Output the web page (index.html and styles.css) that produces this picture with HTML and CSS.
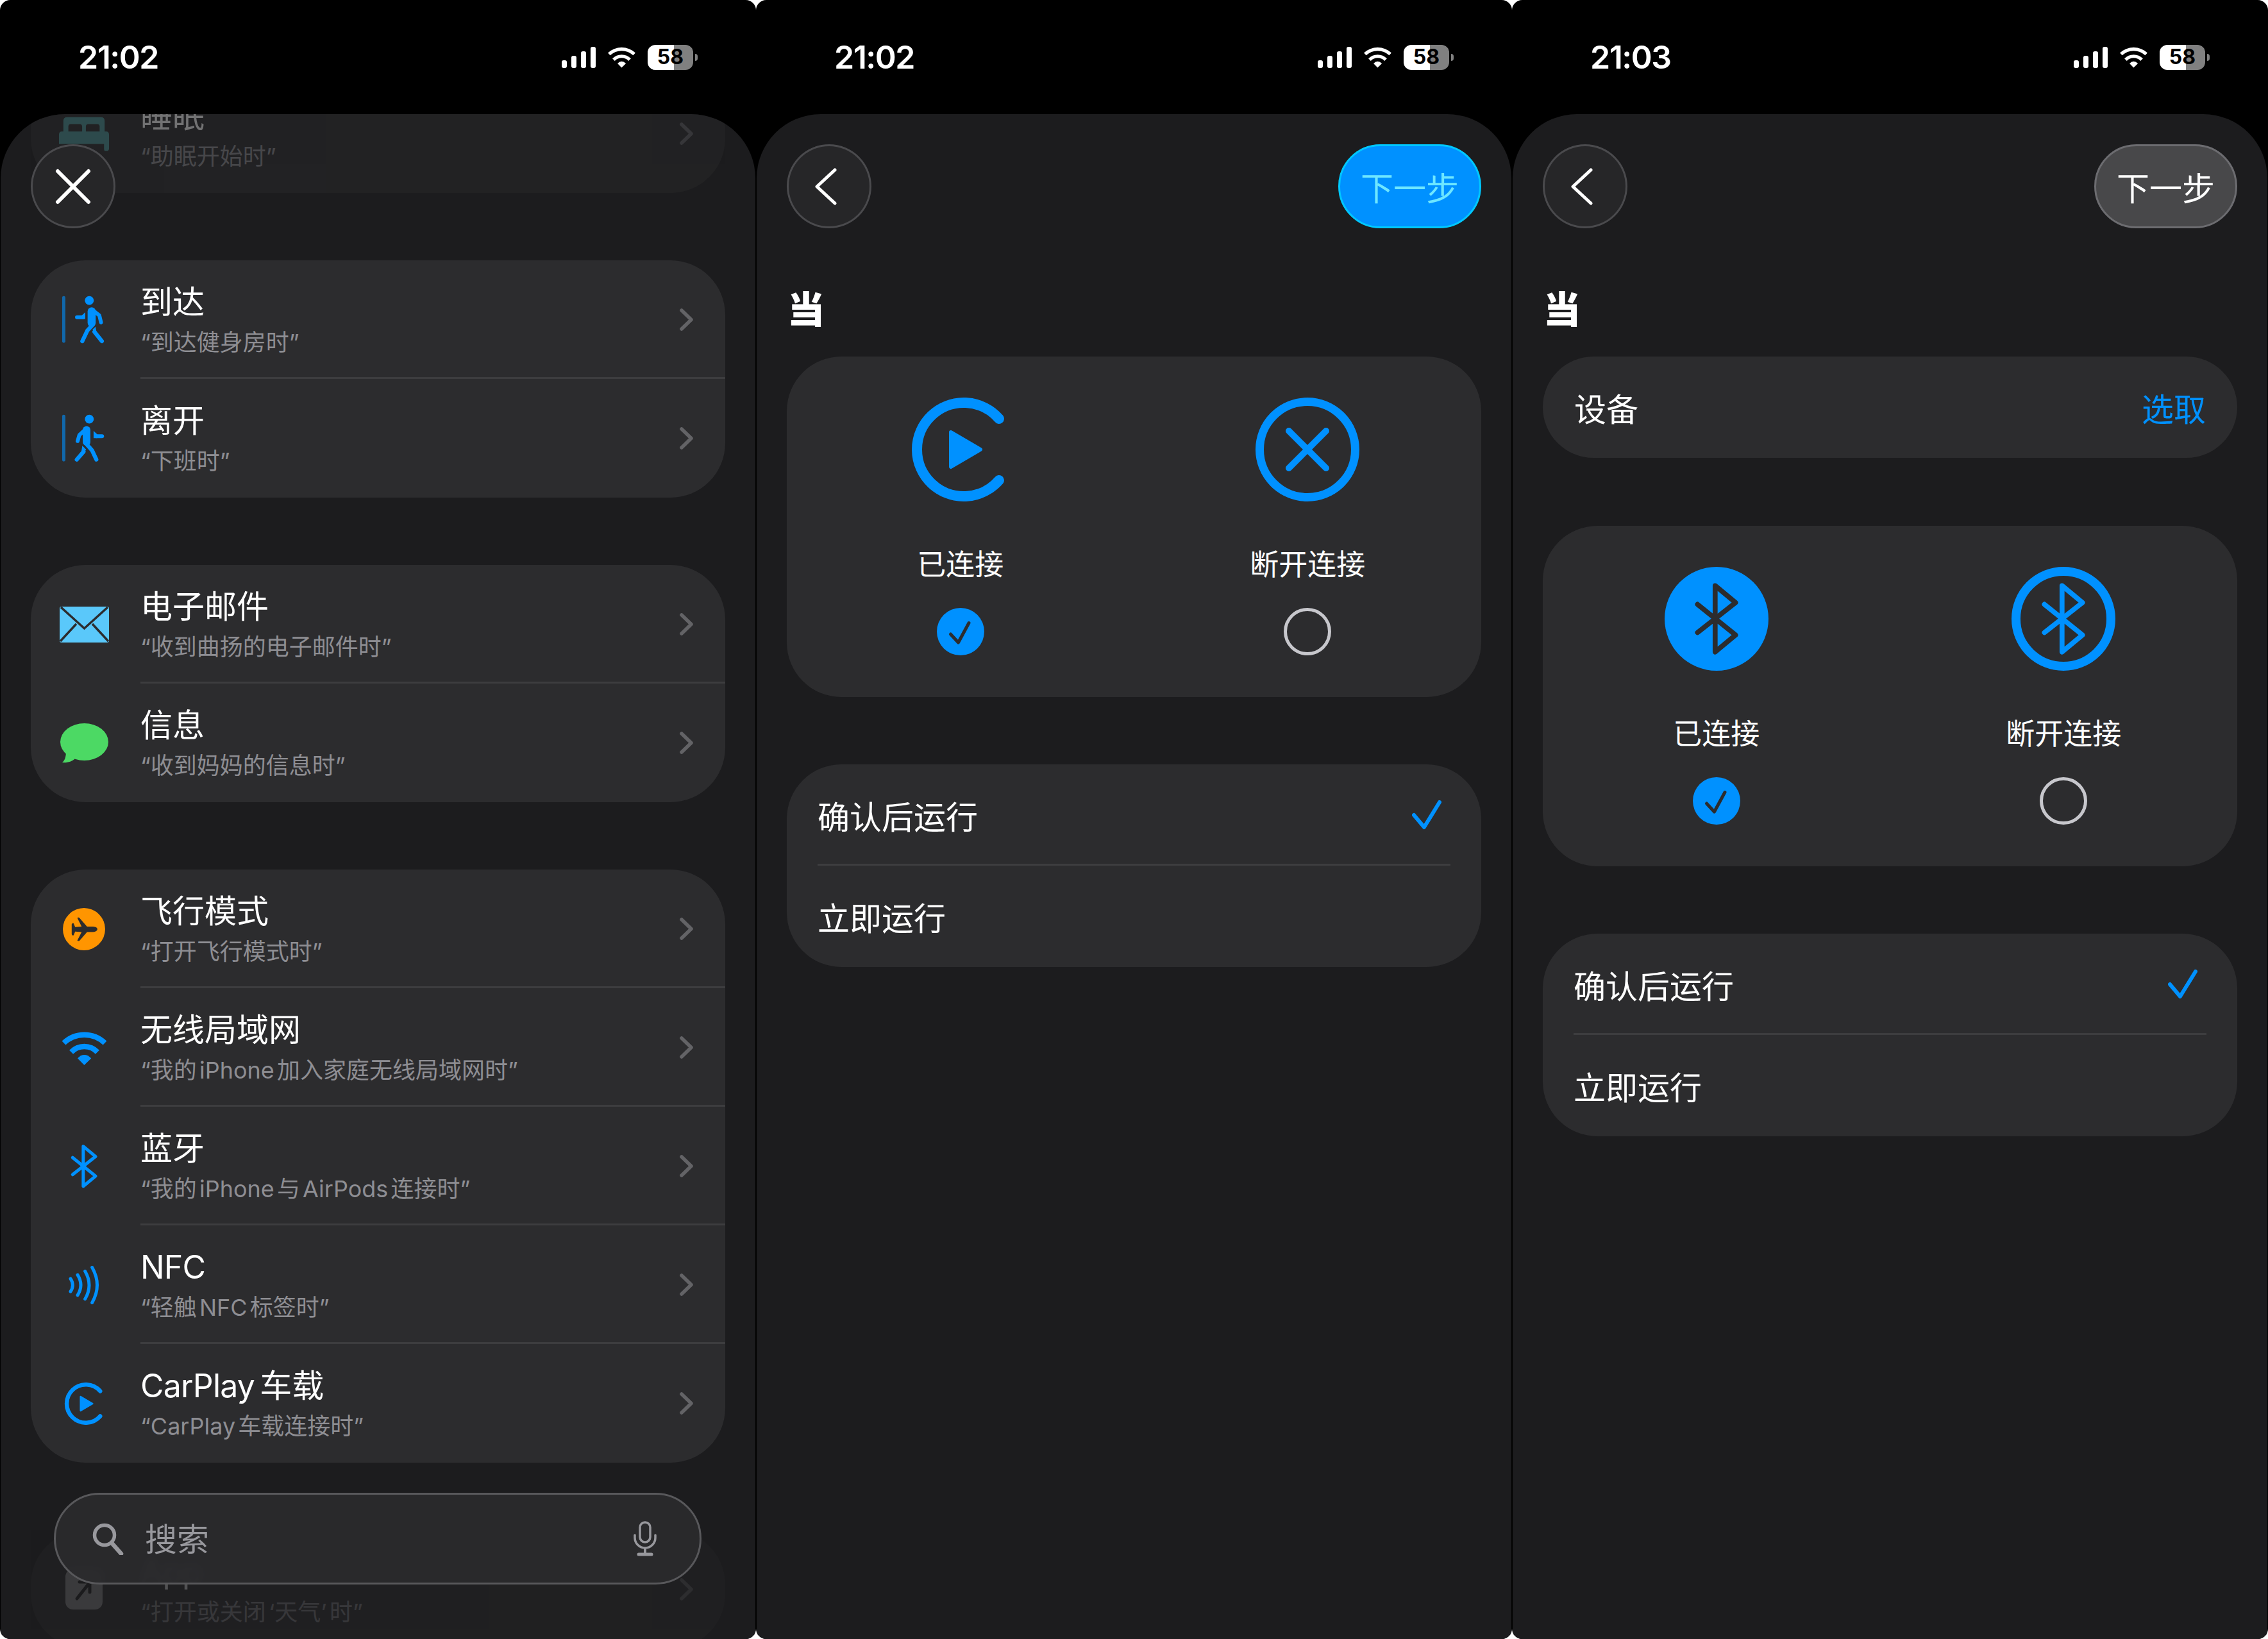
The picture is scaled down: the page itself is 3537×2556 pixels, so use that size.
FILE: index.html
```html
<!DOCTYPE html>
<html lang="zh-CN">
<head>
    <meta charset="UTF-8">
    <meta name="viewport" content="width=device-width, initial-scale=1.0">
    <title>快捷指令自动化</title>
    <link rel="stylesheet" href="styles.css">
</head>
<body>
    <!-- shared icons -->
    <svg class="sprite" aria-hidden="true">
        <symbol id="i-wifi" viewBox="40 615 233 172">
            <path d="M57 678A144 144 0 0 1 256 678M93 722A88 88 0 0 1 220 722" fill="none" stroke="currentColor" stroke-width="26"/>
            <path d="M124 752Q156 718 190 752L156 785Z" fill="currentColor"/>
        </symbol>
        <symbol id="i-chev" viewBox="0 0 21 35">
            <path d="M3 3L18 17.5L3 32" fill="none" stroke="currentColor" stroke-width="5.5" stroke-linecap="round" stroke-linejoin="round"/>
        </symbol>
        <symbol id="i-play" viewBox="0 0 162 162">
            <path d="M138 33A73 73 0 1 0 138 129" fill="none" stroke="currentColor" stroke-width="16" stroke-linecap="round"/>
            <path d="M63 54L109 81L63 108Z" fill="currentColor" stroke="currentColor" stroke-width="6" stroke-linejoin="round"/>
        </symbol>
        <symbol id="i-bt" viewBox="85 68 137 217">
            <path d="M100 135L208 222L150 270V82L208 130L100 215" fill="none" stroke="currentColor" stroke-width="15" stroke-linecap="round" stroke-linejoin="round"/>
        </symbol>
        <symbol id="i-walk-in" viewBox="40 50 240 250">
            <path d="M65 72V277" stroke="currentColor" stroke-width="15" stroke-linecap="round" opacity="0.6"/>
            <circle cx="185" cy="85" r="21" fill="currentColor"/>
            <g fill="none" stroke="currentColor" stroke-linecap="round" stroke-linejoin="round">
                <path d="M203 132L232 155L240 188" stroke-width="18"/>
                <path d="M196 136V190" stroke-width="38"/>
                <path d="M200 200L176 226L152 276" stroke-width="19"/>
                <path d="M209 232L244 276" stroke-width="19"/>
                <path d="M127 164H155" stroke-width="18"/>
            </g>
            <path d="M150 155L166 140V172H150Z M200 222L214 208L220 238L208 240Z" fill="currentColor"/>
        </symbol>
        <symbol id="i-walk-out" viewBox="40 50 240 250">
            <path d="M65 72V277" stroke="currentColor" stroke-width="15" stroke-linecap="round" opacity="0.6"/>
            <circle cx="185" cy="85" r="21" fill="currentColor"/>
            <g fill="none" stroke="currentColor" stroke-linecap="round" stroke-linejoin="round">
                <path d="M165 135L138 160L130 188" stroke-width="18"/>
                <path d="M172 136V192" stroke-width="36"/>
                <path d="M170 200L198 232L218 275" stroke-width="19"/>
                <path d="M158 238L126 275" stroke-width="19"/>
                <path d="M245 165H218" stroke-width="18"/>
            </g>
            <path d="M205 140L222 156V174H205Z M152 210L170 228L158 246L148 236Z" fill="currentColor"/>
        </symbol>
    </svg>

    <div class="phones">
        <!-- trigger list -->
        <section class="phone">
            <div class="statusbar">
                <span class="time">21:02</span>
                <div class="status-icons">
                    <div class="signal"><i></i><i></i><i></i><i></i></div>
                    <svg class="status-wifi"><use href="#i-wifi"/></svg>
                    <div class="battery"><b>58</b></div>
                    <span class="battery-cap"></span>
                </div>
            </div>
            <div class="sheet">
                <div class="list">
                    <div class="card ghost ghost-top">
                        <div class="row">
                            <div class="row-icon">
                                <svg class="bed" viewBox="0 0 82 54"><path d="M8 27V6Q8 0 14 0H68Q74 0 74 6V23H66V15Q66 11 62 11H48Q44 11 44 15V23H38V15Q38 11 34 11H20Q16 11 16 15V23H8Z M6 23H76Q81 23 81 28V50Q81 54 77 54H75Q73 54 73 50V43H1V28Q1 23 6 23Z" fill="currentColor"/></svg>
                            </div>
                            <div class="row-body">
                                <div class="row-text"><div class="row-title">睡眠</div><div class="row-sub">“助眠开始时”</div></div>
                                <svg class="chev"><use href="#i-chev"/></svg>
                            </div>
                        </div>
                    </div>

                    <div class="card">
                        <div class="row">
                            <div class="row-icon"><svg class="walk"><use href="#i-walk-in"/></svg></div>
                            <div class="row-body">
                                <div class="row-text"><div class="row-title">到达</div><div class="row-sub">“到达健身房时”</div></div>
                                <svg class="chev"><use href="#i-chev"/></svg>
                            </div>
                        </div>
                        <div class="row">
                            <div class="row-icon"><svg class="walk"><use href="#i-walk-out"/></svg></div>
                            <div class="row-body">
                                <div class="row-text"><div class="row-title">离开</div><div class="row-sub">“下班时”</div></div>
                                <svg class="chev"><use href="#i-chev"/></svg>
                            </div>
                        </div>
                    </div>

                    <div class="card">
                        <div class="row">
                            <div class="row-icon">
                                <svg class="mail" viewBox="0 0 77 56">
                                    <rect width="77" height="56" rx="3" fill="#5ac8fa"/>
                                    <path d="M2 1L38.5 34L75 1M1 54L26 27M76 54L51 27" fill="none" stroke="#2c2c2e" stroke-width="3.5"/>
                                </svg>
                            </div>
                            <div class="row-body">
                                <div class="row-text"><div class="row-title">电子邮件</div><div class="row-sub">“收到曲扬的电子邮件时”</div></div>
                                <svg class="chev"><use href="#i-chev"/></svg>
                            </div>
                        </div>
                        <div class="row">
                            <div class="row-icon">
                                <svg class="bubble" viewBox="0 0 75 62">
                                    <ellipse cx="37.5" cy="29" rx="37.5" ry="29" fill="#4cd964"/>
                                    <path d="M9 44C9 52 7 58 3 61C10 62 18 60 23 55Z" fill="#4cd964"/>
                                </svg>
                            </div>
                            <div class="row-body">
                                <div class="row-text"><div class="row-title">信息</div><div class="row-sub">“收到妈妈的信息时”</div></div>
                                <svg class="chev"><use href="#i-chev"/></svg>
                            </div>
                        </div>
                    </div>

                    <div class="card">
                        <div class="row">
                            <div class="row-icon">
                                <svg class="plane" viewBox="58 49 196 196">
                                    <circle cx="156" cy="147" r="98" fill="#ff9500"/>
                                    <path d="M218 147C218 140 210 136 198 135L170 135L135 95Q130 91 125 95L145 135L115 137L108 120Q100 118 99 125L99 170Q100 178 108 175L115 158L145 160L125 200Q130 204 136 200L170 160L198 160C210 159 218 154 218 147Z" fill="#2c2c2e"/>
                                </svg>
                            </div>
                            <div class="row-body">
                                <div class="row-text"><div class="row-title">飞行模式</div><div class="row-sub">“打开飞行模式时”</div></div>
                                <svg class="chev"><use href="#i-chev"/></svg>
                            </div>
                        </div>
                        <div class="row">
                            <div class="row-icon"><svg class="wifi"><use href="#i-wifi"/></svg></div>
                            <div class="row-body">
                                <div class="row-text"><div class="row-title">无线局域网</div><div class="row-sub">“我的 iPhone 加入家庭无线局域网时”</div></div>
                                <svg class="chev"><use href="#i-chev"/></svg>
                            </div>
                        </div>
                        <div class="row">
                            <div class="row-icon"><svg class="bt"><use href="#i-bt"/></svg></div>
                            <div class="row-body">
                                <div class="row-text"><div class="row-title">蓝牙</div><div class="row-sub">“我的 iPhone 与 AirPods 连接时”</div></div>
                                <svg class="chev"><use href="#i-chev"/></svg>
                            </div>
                        </div>
                        <div class="row">
                            <div class="row-icon">
                                <svg class="nfc" viewBox="80 640 150 185">
                                    <path d="M92 703Q112 733 92 763M125 685Q155 733 125 780M160 668Q198 733 160 798M193 650Q240 733 193 815" fill="none" stroke="currentColor" stroke-width="15" stroke-linecap="round"/>
                                </svg>
                            </div>
                            <div class="row-body">
                                <div class="row-text"><div class="row-title latin">NFC</div><div class="row-sub">“轻触 NFC 标签时”</div></div>
                                <svg class="chev"><use href="#i-chev"/></svg>
                            </div>
                        </div>
                        <div class="row">
                            <div class="row-icon"><svg class="carplay"><use href="#i-play"/></svg></div>
                            <div class="row-body">
                                <div class="row-text"><div class="row-title"><span class="latin">CarPlay</span> 车载</div><div class="row-sub">“CarPlay 车载连接时”</div></div>
                                <svg class="chev"><use href="#i-chev"/></svg>
                            </div>
                        </div>
                    </div>

                    <div class="card ghost ghost-bottom">
                        <div class="row">
                            <div class="row-icon">
                                <svg class="shortcut" viewBox="0 0 58 63">
                                    <rect width="58" height="63" rx="12" fill="currentColor"/>
                                    <path d="M18 46L37 22M22 20H38V36" fill="none" stroke="#1c1c1e" stroke-width="5" stroke-linecap="round"/>
                                </svg>
                            </div>
                            <div class="row-body">
                                <div class="row-text"><div class="row-title">App</div><div class="row-sub">“打开或关闭 ‘天气’ 时”</div></div>
                                <svg class="chev"><use href="#i-chev"/></svg>
                            </div>
                        </div>
                    </div>
                </div>

                <button class="round-btn close-btn">
                    <svg class="close-x" viewBox="0 0 56 56"><path d="M4 4L52 52M52 4L4 52" stroke="currentColor" stroke-width="6" stroke-linecap="round"/></svg>
                </button>

                <div class="searchbar">
                    <svg class="search-icon" viewBox="0 0 50 50"><circle cx="19" cy="19" r="15.5" fill="none" stroke="currentColor" stroke-width="5.5"/><path d="M30 31L45 48" stroke="currentColor" stroke-width="6.5" stroke-linecap="round"/></svg>
                    <span class="search-label">搜索</span>
                    <svg class="mic" viewBox="0 0 38 55">
                        <rect x="11" y="2" width="16" height="31" rx="8" fill="none" stroke="currentColor" stroke-width="3.5"/>
                        <path d="M3 22V26A16 16 0 0 0 35 26V22" fill="none" stroke="currentColor" stroke-width="3.5" stroke-linecap="round"/>
                        <path d="M19 42V50" stroke="currentColor" stroke-width="4"/>
                        <path d="M9 52H29" stroke="currentColor" stroke-width="5" stroke-linecap="round"/>
                    </svg>
                </div>
            </div>
        </section>

        <!-- carplay trigger -->
        <section class="phone">
            <div class="statusbar">
                <span class="time">21:02</span>
                <div class="status-icons">
                    <div class="signal"><i></i><i></i><i></i><i></i></div>
                    <svg class="status-wifi"><use href="#i-wifi"/></svg>
                    <div class="battery"><b>58</b></div>
                    <span class="battery-cap"></span>
                </div>
            </div>
            <div class="sheet sheet-form">
                <div class="topbar">
                    <button class="round-btn">
                        <svg class="back-chev" viewBox="0 0 34 58"><path d="M31 3L3 29L31 55" fill="none" stroke="currentColor" stroke-width="5" stroke-linecap="round" stroke-linejoin="round"/></svg>
                    </button>
                    <button class="next-btn next-on">下一步</button>
                </div>
                <h2 class="form-title">当</h2>
                <div class="card choice-card">
                    <div class="choice">
                        <svg class="choice-icon play-shift"><use href="#i-play"/></svg>
                        <span class="choice-label">已连接</span>
                        <span class="radio radio-on">
                            <svg viewBox="0 0 74 74"><path d="M21.5 41L33.5 54L50 23.5" fill="none" stroke="#2c2c2e" stroke-width="5" stroke-linecap="round" stroke-linejoin="round"/></svg>
                        </span>
                    </div>
                    <div class="choice">
                        <svg class="choice-icon" viewBox="0 0 162 162">
                            <circle cx="81" cy="81" r="74.5" fill="none" stroke="currentColor" stroke-width="13"/>
                            <path d="M52 52L110 110M110 52L52 110" stroke="currentColor" stroke-width="10" stroke-linecap="round"/>
                        </svg>
                        <span class="choice-label">断开连接</span>
                        <span class="radio"></span>
                    </div>
                </div>
                <div class="card run-card">
                    <div class="run-row"><div class="run-body"><span>确认后运行</span>
                        <svg class="tick" viewBox="0 0 46 46"><path d="M3 23L19 42L43 3" fill="none" stroke="currentColor" stroke-width="6" stroke-linecap="round" stroke-linejoin="round"/></svg>
                    </div></div>
                    <div class="run-row"><div class="run-body"><span>立即运行</span></div></div>
                </div>
            </div>
        </section>

        <!-- bluetooth trigger -->
        <section class="phone">
            <div class="statusbar">
                <span class="time">21:03</span>
                <div class="status-icons">
                    <div class="signal"><i></i><i></i><i></i><i></i></div>
                    <svg class="status-wifi"><use href="#i-wifi"/></svg>
                    <div class="battery"><b>58</b></div>
                    <span class="battery-cap"></span>
                </div>
            </div>
            <div class="sheet sheet-form">
                <div class="topbar">
                    <button class="round-btn">
                        <svg class="back-chev" viewBox="0 0 34 58"><path d="M31 3L3 29L31 55" fill="none" stroke="currentColor" stroke-width="5" stroke-linecap="round" stroke-linejoin="round"/></svg>
                    </button>
                    <button class="next-btn">下一步</button>
                </div>
                <h2 class="form-title">当</h2>
                <div class="card device-row">
                    <span>设备</span>
                    <span class="device-pick">选取</span>
                </div>
                <div class="card choice-card">
                    <div class="choice">
                        <svg class="choice-icon" viewBox="0 0 162 162">
                            <circle cx="81" cy="81" r="81" fill="currentColor"/>
                            <path transform="translate(81 81) scale(.55) translate(-154 -176)" d="M100 135L208 222L150 270V82L208 130L100 215" fill="none" stroke="#2c2c2e" stroke-width="14" stroke-linecap="round" stroke-linejoin="round"/>
                        </svg>
                        <span class="choice-label">已连接</span>
                        <span class="radio radio-on">
                            <svg viewBox="0 0 74 74"><path d="M21.5 41L33.5 54L50 23.5" fill="none" stroke="#2c2c2e" stroke-width="5" stroke-linecap="round" stroke-linejoin="round"/></svg>
                        </span>
                    </div>
                    <div class="choice">
                        <svg class="choice-icon" viewBox="0 0 162 162">
                            <circle cx="81" cy="81" r="74" fill="none" stroke="currentColor" stroke-width="14"/>
                            <path transform="translate(81 81) scale(.55) translate(-154 -176)" d="M100 135L208 222L150 270V82L208 130L100 215" fill="none" stroke="currentColor" stroke-width="14" stroke-linecap="round" stroke-linejoin="round"/>
                        </svg>
                        <span class="choice-label">断开连接</span>
                        <span class="radio"></span>
                    </div>
                </div>
                <div class="card run-card">
                    <div class="run-row"><div class="run-body"><span>确认后运行</span>
                        <svg class="tick" viewBox="0 0 46 46"><path d="M3 23L19 42L43 3" fill="none" stroke="currentColor" stroke-width="6" stroke-linecap="round" stroke-linejoin="round"/></svg>
                    </div></div>
                    <div class="run-row"><div class="run-body"><span>立即运行</span></div></div>
                </div>
            </div>
        </section>
    </div>
</body>
</html>
```

FILE: styles.css
```css
* {
    box-sizing: border-box;
}
body {
    margin: 0;
    background-color: #fff;
    color: #fff;
    font-family: Inter, "Noto Sans CJK SC", sans-serif;
}
.sprite {
    display: none;
}
.phones {
    display: grid;
    grid-template-columns: repeat(3, 1fr);
    height: 100vh;
}
.phone {
    display: flex;
    flex-direction: column;
    background-color: #000;
    border-radius: 16px;
    overflow: hidden;
}

/* status bar */
.statusbar {
    flex: none;
    height: 178px;
    display: flex;
    justify-content: space-between;
    align-items: center;
    padding: 0 91px 0 122px;
}
.time {
    font-size: 50px;
    font-weight: 600;
    letter-spacing: -1.5px;
}
.status-icons {
    display: flex;
    align-items: center;
}
.signal {
    display: flex;
    align-items: flex-end;
    gap: 6.5px;
    height: 33px;
    margin-right: 17px;
}
.signal i {
    width: 8.5px;
    background-color: #fff;
    border-radius: 3px;
}
.signal i:nth-child(1) { height: 12px; }
.signal i:nth-child(2) { height: 19px; }
.signal i:nth-child(3) { height: 26px; }
.signal i:nth-child(4) { height: 33px; }
.status-wifi {
    width: 47px;
    height: 34px;
    color: #fff;
    margin-right: 17px;
}
.battery {
    width: 71px;
    height: 39px;
    border-radius: 12px;
    background: linear-gradient(90deg, #fff 58%, #808080 58%);
    display: flex;
    align-items: center;
    justify-content: center;
    color: #000;
    font-size: 32px;
    line-height: 1;
}
.battery b {
    font-weight: 700;
}
.battery-cap {
    width: 4px;
    height: 11px;
    margin-left: 3px;
    background-color: #808080;
    border-radius: 0 5px 5px 0;
}

/* sheet */
.sheet {
    flex: 1;
    min-height: 0;
    position: relative;
    margin: 0 1px;
    background-color: #1c1c1e;
    border-radius: 100px 100px 0 0;
    overflow: hidden;
}
.sheet-form {
    padding: 47px 47px 0;
}
.list {
    margin-top: -62px;
    padding: 0 47px;
    display: flex;
    flex-direction: column;
    gap: 105px;
}
.card {
    background-color: #2c2c2e;
    border-radius: 85px;
}
.ghost {
    flex: none;
}
.ghost-top {
    opacity: 0.38;
}
.ghost-bottom {
    opacity: 0.24;
}

/* list rows */
.row {
    height: 185px;
    display: flex;
}
.row-icon {
    flex: none;
    width: 80px;
    margin-left: 43px;
    margin-right: 48px;
    display: flex;
    align-items: center;
    justify-content: center;
    color: #0091ff;
}
.row-body {
    flex: 1;
    display: flex;
    align-items: center;
    justify-content: space-between;
    padding-right: 50px;
}
.row + .row .row-body {
    margin-top: -3px;
    border-top: 3px solid #3d3d3f;
}
.row-text {
    display: flex;
    flex-direction: column;
    gap: 8px;
    padding-top: 2px;
}
.row-title {
    font-size: 50px;
    line-height: 60px;
    word-spacing: -6px;
}
.latin {
    letter-spacing: -0.8px;
}
.row-sub {
    font-size: 36px;
    line-height: 50px;
    color: #8e8e93;
    word-spacing: -6px;
}
.chev {
    flex: none;
    width: 21px;
    height: 35px;
    color: #636366;
}
.walk { width: 80px; height: 83px; }
.mail { width: 77px; height: 56px; }
.bubble { width: 75px; height: 62px; }
.plane { width: 66px; height: 66px; }
.wifi { width: 75px; height: 56px; }
.bt { width: 46px; height: 72px; }
.nfc { width: 50px; height: 62px; }
.carplay { width: 66px; height: 66px; margin-left: 4px; }
.bed { width: 82px; height: 54px; color: #4b9698; }
.shortcut { width: 58px; height: 63px; color: #9a9a9e; }

/* buttons */
.round-btn {
    width: 132px;
    height: 131px;
    padding: 0;
    display: flex;
    align-items: center;
    justify-content: center;
    background-color: #262628;
    border: 3px solid #4a4a4d;
    border-radius: 50%;
    color: #fff;
}
.close-btn {
    position: absolute;
    top: 47px;
    left: 47px;
}
.close-x {
    width: 56px;
    height: 56px;
}
.back-chev {
    width: 34px;
    height: 58px;
    margin-right: 10px;
}
.next-btn {
    width: 223px;
    height: 131px;
    padding: 0;
    font: inherit;
    font-size: 51px;
    color: #fff;
    background-color: #48484a;
    border: 3px solid #6c6c70;
    border-radius: 66px;
}
.next-on {
    color: #6ee7ff;
    background-color: #0091ff;
    border-color: #00c8ff;
}

/* search */
.searchbar {
    position: absolute;
    left: 83px;
    bottom: 85px;
    width: 1010px;
    height: 143px;
    display: flex;
    align-items: center;
    padding: 0 66px 0 57px;
    background-color: rgba(42, 42, 44, 0.92);
    backdrop-filter: blur(6px);
    border: 3px solid #58585b;
    border-radius: 72px;
    color: #98989d;
}
.search-icon {
    flex: none;
    width: 50px;
    height: 50px;
}
.search-label {
    flex: 1;
    margin-left: 32px;
    padding-top: 3px;
    font-size: 50px;
    line-height: 60px;
}
.mic {
    flex: none;
    width: 38px;
    height: 55px;
}

/* forms */
.topbar {
    display: flex;
    justify-content: space-between;
    align-items: center;
}
.form-title {
    margin: 92px 0 38px;
    padding-left: 1px;
    font-size: 58px;
    line-height: 70px;
    font-weight: 900;
}
.choice-card {
    height: 531px;
    display: grid;
    grid-template-columns: 1fr 1fr;
    padding-top: 64px;
}
.choice {
    display: flex;
    flex-direction: column;
    align-items: center;
}
.choice-icon {
    width: 162px;
    height: 162px;
    color: #0091ff;
}
.play-shift {
    margin-left: 6px;
}
.choice-label {
    margin-top: 69px;
    font-size: 45px;
    line-height: 60px;
}
.radio {
    width: 74px;
    height: 74px;
    margin-top: 37px;
    border: 5px solid #c7c7cc;
    border-radius: 50%;
}
.radio-on {
    background-color: #0091ff;
    border: 0;
}
.radio svg {
    display: block;
    width: 74px;
    height: 74px;
}
.device-row {
    height: 158px;
    margin-bottom: 106px;
    border-radius: 79px;
    display: flex;
    align-items: center;
    justify-content: space-between;
    padding: 0 49px;
    font-size: 50px;
}
.device-pick {
    color: #0091ff;
}
.run-card {
    margin-top: 105px;
    height: 316px;
}
.run-row {
    height: 158px;
    padding: 0 48px;
}
.run-body {
    height: 100%;
    display: flex;
    align-items: center;
    justify-content: space-between;
    font-size: 50px;
}
.run-row + .run-row .run-body {
    margin-top: -3px;
    height: calc(100% + 3px);
    border-top: 3px solid #3d3d3f;
}
.tick {
    width: 46px;
    height: 46px;
    margin-right: 14px;
    color: #0091ff;
}
```
